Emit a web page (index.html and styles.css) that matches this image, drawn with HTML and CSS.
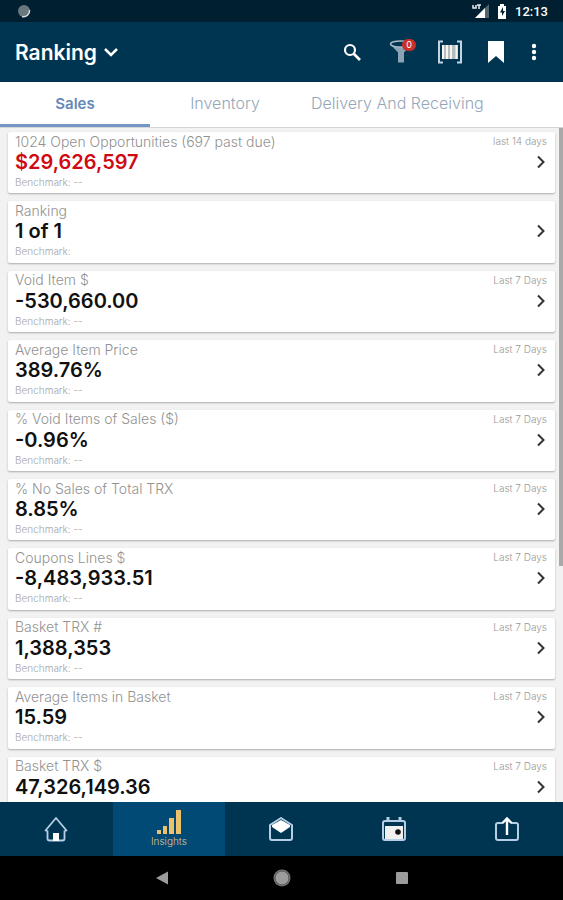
FILE: index.html
```html
<!DOCTYPE html>
<html lang="en">
<head>
    <meta charset="UTF-8">
    <meta name="viewport" content="width=device-width, initial-scale=1.0">
    <title>Ranking</title>
    <link rel="stylesheet" href="styles.css">
</head>
<body>
    <div class="status-bar">
        <svg class="status-dot" width="14" height="14" viewBox="0 0 14 14">
            <circle cx="7" cy="7" r="6" fill="#69777f"/>
            <path d="M12.500 6A6 6 0 0 1 5 12.500" fill="none" stroke="#d5dcdf" stroke-width="1.500"/>
        </svg>
        <svg width="18" height="14" viewBox="0 0 18 14">
            <path d="M17 0V14H3z" fill="#53656f"/>
            <path d="M13 4V14H3z" fill="#fff"/>
            <path d="M1 1v3h3V1M5 1h4M7 1v4" fill="none" stroke="#e8eef0" stroke-width="1.500"/>
        </svg>
        <svg class="battery" width="10" height="15" viewBox="0 0 10 15">
            <path d="M3 0h4v2h2v13H1V2h2z" fill="#fff"/>
            <path d="M6 3L3 8.500h2V12l3-5H6z" fill="#001f30"/>
        </svg>
        <span class="clock">12:13</span>
    </div>

    <header class="app-bar">
        <button class="app-title">
            Ranking
            <svg width="16" height="10" viewBox="0 0 16 10"><path d="M2 2l6 6 6-6" fill="none" stroke="#fff" stroke-width="2.500"/></svg>
        </button>
        <div class="actions">
            <button class="action" aria-label="Search">
                <svg width="20" height="20" viewBox="0 0 20 20"><circle cx="7" cy="8" r="5" fill="none" stroke="#fff" stroke-width="2.200"/><path d="M10.500 11.500L17 18" stroke="#fff" stroke-width="2.600"/></svg>
            </button>
            <button class="action" aria-label="Filter">
                <svg width="26" height="24" viewBox="0 0 26 24">
                    <path d="M3 4l8 8.500v10h6v-10L25 4z" fill="#8ca3b3"/>
                    <ellipse cx="14" cy="4" rx="10.500" ry="3" fill="#003552" stroke="#a5b9c6" stroke-width="1.500"/>
                </svg>
                <span class="badge">0</span>
            </button>
            <button class="action" aria-label="Scan barcode">
                <svg width="26" height="24" viewBox="0 0 26 24">
                    <path d="M6 1.500H2v21h4M20 1.500h4v21h-4" fill="none" stroke="#c5d3dc" stroke-width="2"/>
                    <path d="M5 5h16v14H5z" fill="#b4bcc0"/>
                    <path d="M6 5v14M10 5v14M14 5v14M19.500 5v14" stroke="#f5f5f0" stroke-width="2"/>
                </svg>
            </button>
            <button class="action" aria-label="Bookmark">
                <svg width="18" height="24" viewBox="0 0 18 24"><path d="M1 1h16v22l-8-7-8 7z" fill="#fff"/></svg>
            </button>
            <button class="action action-more" aria-label="More">
                <svg width="6" height="18" viewBox="0 0 6 18"><g fill="#fff"><circle cx="3" cy="3" r="2.200"/><circle cx="3" cy="9" r="2.200"/><circle cx="3" cy="15" r="2.200"/></g></svg>
            </button>
        </div>
    </header>

    <nav class="tabs">
        <a class="tab active" href="#sales">Sales</a>
        <a class="tab" href="#inventory">Inventory</a>
        <a class="tab" href="#delivery">Delivery And Receiving</a>
    </nav>

    <svg class="symbols">
        <symbol id="chevron" viewBox="0 0 10 14"><path d="M1 1.500L6.500 7 1 12.500" fill="none" stroke="#333" stroke-width="2"/></symbol>
    </svg>

    <main class="content">
        <div class="cards">
            <a class="card" href="#">
                <span class="name">1024 Open Opportunities (697 past due)</span><span class="period">last 14 days</span>
                <span class="value overdue">$29,626,597</span><svg class="chevron"><use href="#chevron"/></svg>
                <span class="benchmark">Benchmark: --</span>
            </a>
            <a class="card" href="#">
                <span class="name">Ranking</span><span class="period"></span>
                <span class="value">1 of 1</span><svg class="chevron"><use href="#chevron"/></svg>
                <span class="benchmark">Benchmark:</span>
            </a>
            <a class="card" href="#">
                <span class="name">Void Item $</span><span class="period">Last 7 Days</span>
                <span class="value">-530,660.00</span><svg class="chevron"><use href="#chevron"/></svg>
                <span class="benchmark">Benchmark: --</span>
            </a>
            <a class="card" href="#">
                <span class="name">Average Item Price</span><span class="period">Last 7 Days</span>
                <span class="value">389.76%</span><svg class="chevron"><use href="#chevron"/></svg>
                <span class="benchmark">Benchmark: --</span>
            </a>
            <a class="card" href="#">
                <span class="name">% Void Items of Sales ($)</span><span class="period">Last 7 Days</span>
                <span class="value">-0.96%</span><svg class="chevron"><use href="#chevron"/></svg>
                <span class="benchmark">Benchmark: --</span>
            </a>
            <a class="card" href="#">
                <span class="name">% No Sales of Total TRX</span><span class="period">Last 7 Days</span>
                <span class="value">8.85%</span><svg class="chevron"><use href="#chevron"/></svg>
                <span class="benchmark">Benchmark: --</span>
            </a>
            <a class="card" href="#">
                <span class="name">Coupons Lines $</span><span class="period">Last 7 Days</span>
                <span class="value">-8,483,933.51</span><svg class="chevron"><use href="#chevron"/></svg>
                <span class="benchmark">Benchmark: --</span>
            </a>
            <a class="card" href="#">
                <span class="name">Basket TRX #</span><span class="period">Last 7 Days</span>
                <span class="value">1,388,353</span><svg class="chevron"><use href="#chevron"/></svg>
                <span class="benchmark">Benchmark: --</span>
            </a>
            <a class="card" href="#">
                <span class="name">Average Items in Basket</span><span class="period">Last 7 Days</span>
                <span class="value">15.59</span><svg class="chevron"><use href="#chevron"/></svg>
                <span class="benchmark">Benchmark: --</span>
            </a>
            <a class="card" href="#">
                <span class="name">Basket TRX $</span><span class="period">Last 7 Days</span>
                <span class="value">47,326,149.36</span><svg class="chevron"><use href="#chevron"/></svg>
            </a>
        </div>
        <div class="scrollbar"></div>
    </main>

    <nav class="bottom-nav">
        <a class="nav-item" href="#" aria-label="Home">
            <svg width="24" height="26" viewBox="0 0 24 26">
                <path d="M1.500 14.500L12 2l10.500 12.500-2 .5V22.500q0 2-2 2h-13q-2 0-2-2V15z" fill="none" stroke="#b5d0e6" stroke-width="1.800" stroke-linejoin="round"/>
                <path d="M9 17h6v8H9z" fill="#fff"/>
            </svg>
        </a>
        <a class="nav-item active" href="#">
            <svg width="26" height="24" viewBox="0 0 26 24">
                <path d="M1 20h4v4H1zM7 16h4v8H7zM13 8h5v16h-5zM20 0h5v24h-5z" fill="#edc06b"/>
            </svg>
            <span class="nav-label">Insights</span>
        </a>
        <a class="nav-item" href="#" aria-label="Inbox">
            <svg width="26" height="26" viewBox="0 0 26 26">
                <path d="M2 9L13 2l11 7v13q0 2-2 2H4q-2 0-2-2z" fill="none" stroke="#b5d0e6" stroke-width="2" stroke-linejoin="round"/>
                <path d="M4 9L13 4l9 5v2l-9 6-9-6z" fill="#fff"/>
            </svg>
        </a>
        <a class="nav-item" href="#" aria-label="Calendar">
            <svg width="26" height="26" viewBox="0 0 26 26">
                <path d="M4 5h18q2 0 2 2v15q0 2-2 2H4q-2 0-2-2V7q0-2 2-2z" fill="none" stroke="#b5d0e6" stroke-width="2"/>
                <path d="M4 10h18v13H4z" fill="#f0f0ee"/>
                <path d="M7 1v5M19 1v5" stroke="#b5d0e6" stroke-width="3"/>
                <circle cx="17" cy="16" r="2.800" fill="#111"/>
            </svg>
        </a>
        <a class="nav-item" href="#" aria-label="Share">
            <svg width="26" height="26" viewBox="0 0 26 26">
                <path d="M9 7H4Q2 7 2 9v13q0 2 2 2h18q2 0 2-2V9q0-2-2-2h-5" fill="none" stroke="#b5d0e6" stroke-width="2"/>
                <path d="M13 19V3M8.500 7L13 2.500 17.500 7" fill="none" stroke="#fff" stroke-width="2.400"/>
            </svg>
        </a>
    </nav>

    <div class="system-nav">
        <button class="system-button" aria-label="Back"><svg width="16" height="16" viewBox="0 0 16 16"><path d="M2 8l12-6.500v13z" fill="#9c9c9c"/></svg></button>
        <button class="system-button" aria-label="Home"><svg width="20" height="20" viewBox="0 0 20 20"><circle cx="10" cy="10" r="8.500" fill="#7a7a7a"/><circle cx="10" cy="10" r="7" fill="#9c9c9c" stroke="#555" stroke-width="1"/></svg></button>
        <button class="system-button" aria-label="Recent apps"><svg width="16" height="16" viewBox="0 0 16 16"><rect x="2" y="2" width="12" height="12" rx="1" fill="#9c9c9c"/></svg></button>
    </div>
</body>
</html>
```
FILE: styles.css
```css
* {
    box-sizing: border-box;
}

body {
    margin: 0;
    height: 100vh;
    display: flex;
    flex-direction: column;
    overflow: hidden;
    font-family: Inter, "Open Sans", sans-serif;
    background-color: #f2f2f2;
}

a {
    color: inherit;
    text-decoration: none;
}

button {
    padding: 0;
    border: 0;
    background: none;
    font-family: inherit;
    color: inherit;
}

svg {
    display: block;
    flex: none;
}

.symbols {
    display: none;
}

/* Android status bar */
.status-bar {
    flex: none;
    height: 22px;
    padding: 0 15px 0 17px;
    display: flex;
    align-items: center;
    background-color: #001f30;
    color: #fff;
}

.status-dot {
    margin-right: auto;
}

.battery {
    margin: 0 8px 0 7px;
}

.clock {
    font-family: Roboto, sans-serif;
    font-size: 13px;
    font-weight: 500;
}

.app-bar {
    flex: none;
    height: 60px;
    padding: 0 26px 0 15px;
    display: flex;
    align-items: center;
    justify-content: space-between;
    background-color: #003552;
    color: #fff;
}

.app-title {
    display: flex;
    align-items: center;
    gap: 6px;
    font-size: 21px;
    font-weight: 600;
}

.actions {
    display: flex;
    align-items: center;
    gap: 24px;
}

.action {
    position: relative;
}

.action-more {
    margin-left: 2px;
}

.badge {
    position: absolute;
    top: -1px;
    right: -3px;
    width: 14px;
    height: 12px;
    border-radius: 6px;
    background-color: #c9302c;
    font-size: 9px;
    line-height: 12px;
}

/* Category tabs */
.tabs {
    flex: none;
    height: 46px;
    display: flex;
    background-color: #fff;
    border-bottom: 1px solid #d5d5d5;
    font-size: 16px;
    font-weight: 300;
    color: #94a7b9;
}

.tab {
    min-width: 150px;
    padding: 0 11px;
    display: flex;
    align-items: center;
    justify-content: center;
    border-bottom: 3px solid transparent;
}

.tab.active {
    border-bottom-color: #7296c6;
    font-size: 15px;
    font-weight: 600;
    color: #6489b8;
}

/* KPI list */
.content {
    flex: 1;
    min-height: 0;
    display: flex;
    align-items: flex-start;
    overflow: hidden;
}

.cards {
    flex: 1;
    min-height: 690px;
    padding: 4px 4px 0 8px;
    display: grid;
    grid-auto-rows: 1fr;
    gap: 8px;
}

.card {
    padding: 0 8px 0 7px;
    display: grid;
    grid-template-columns: 1fr auto;
    grid-template-rows: 18px 24px 16px;
    align-items: center;
    background-color: #fff;
    border-radius: 2px;
    box-shadow: 0 1px 2px #aaa;
}

.name {
    font-size: 14px;
    font-weight: 300;
    color: #929292;
}

.period {
    font-size: 10px;
    font-weight: 300;
    color: #999;
}

.value {
    font-size: 20px;
    font-weight: 600;
    color: #111;
}

.value.overdue {
    color: #cf0a12;
}

.chevron {
    width: 10px;
    height: 14px;
    justify-self: end;
}

.benchmark {
    font-size: 10px;
    font-weight: 300;
    color: #a5a5a5;
}

.scrollbar {
    width: 4px;
    height: 65%;
    background-color: #a9a9a9;
}

.bottom-nav {
    flex: none;
    height: 54px;
    display: flex;
    background-color: #003552;
}

.nav-item {
    flex: 1;
    display: flex;
    flex-direction: column;
    align-items: center;
    justify-content: center;
}

.nav-item.active {
    background-color: #004a75;
}

.nav-label {
    font-size: 10px;
    line-height: 14px;
    font-weight: 300;
    color: #dfc58f;
}

/* Android navigation buttons */
.system-nav {
    flex: none;
    height: 44px;
    display: flex;
    align-items: center;
    justify-content: center;
    background-color: #000;
}

.system-button {
    width: 120px;
    display: flex;
    justify-content: center;
}
```
